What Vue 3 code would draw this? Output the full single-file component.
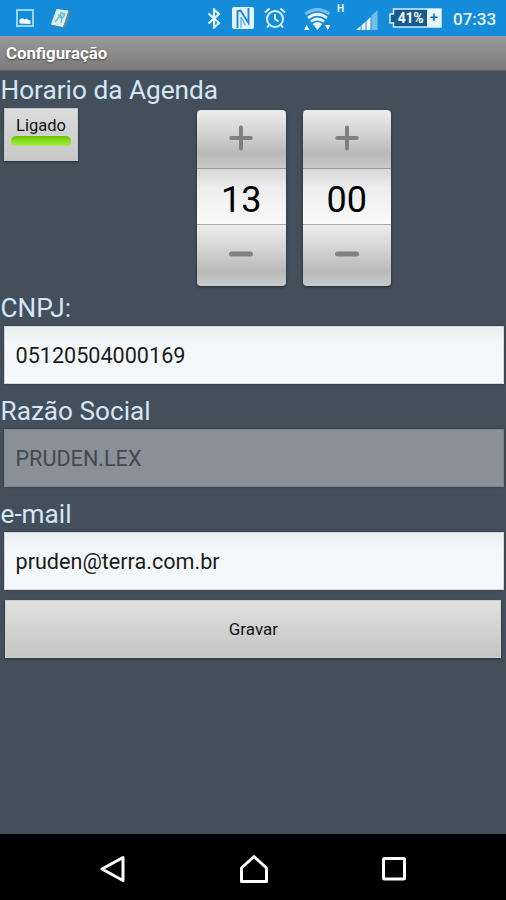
<template>
  <div class="screen">
    <header class="status-bar">
      <svg class="ic-picture" width="18" height="18" viewBox="0 0 18 18">
        <rect x="1" y="1" width="16" height="16" fill="none" stroke="#a9dcf8" stroke-width="1.8" />
        <path d="M3.500 14.500V11l2.500-2 2.500 1.500 2-1 2 1.500 2 .5v3.500z" fill="#fff" />
      </svg>
      <svg class="ic-note" width="21" height="21" viewBox="0 0 21 21">
        <path d="M7 1.500L19.500 3Q20.500 8 15.500 19L13 20 1.500 17.500z" fill="#5f8796" />
        <path d="M6.500 1L18.500 2.500 13 19 .8 16.500z" fill="#dceff0" />
        <path d="M11 4.500l4 1.500-2 3.500-3.500-1zM9.500 8.500L5 14M12 10l-1 5M8 6.500l4 5" fill="#9bd8db" stroke="#65bec7" stroke-width="1.300" />
      </svg>
      <span class="spacer"></span>
      <svg class="ic-bluetooth" width="14" height="21" viewBox="0 0 14 21">
        <path d="M1.500 5.500l10.500 9.500-5 4.500V1.500l5 4.500-10.500 9.500" fill="none" stroke="#e2f4ff" stroke-width="2.200" />
      </svg>
      <svg class="ic-nfc" width="22" height="22" viewBox="0 0 22 22">
        <rect width="22" height="22" rx="2" fill="#e3f4ff" />
        <path d="M5.500 21V4l3-.5L16.500 16V1" fill="none" stroke="#1c86d0" stroke-width="1.900" />
        <path d="M9 21V10l4.500 8.500" fill="none" stroke="#5fb0e4" stroke-width="1.300" />
      </svg>
      <svg class="ic-alarm" width="22" height="22" viewBox="0 0 22 22">
        <g fill="none" stroke="#d8f0ff" stroke-width="2">
          <circle cx="11" cy="12" r="8" />
          <path d="M11 7v5l3.500 2.500M1 5.500L5.500 1.500M21 5.500L16.500 1.500M5 18l-2 2.500M17 18l2 2.500" />
        </g>
      </svg>
      <svg class="ic-wifi" width="27" height="23" viewBox="0 0 27 23">
        <g fill="none" stroke="#eaf7ff" stroke-width="2.700">
          <path d="M1.500 6q12-9 24 0" stroke="#77bfea" stroke-width="3.200" />
          <path d="M4 10q9.500-7.500 19 0" />
          <path d="M7 13.500q6.500-5 13 0" />
          <path d="M9.500 17q4-3 8 0" />
        </g>
        <path d="M10.500 18q3-2 6 0l-3 4zM0 22l2.700-5 2.700 5zM21 17h5.500L23.700 22z" fill="#fff" />
      </svg>
      <span class="net">H</span>
      <svg class="ic-signal" width="22" height="21" viewBox="0 0 22 21">
        <path d="M0 21l4.500-4v4zM5.500 16.500l4-4V21h-4zM10.500 12l4-4v13h-4z" fill="#f0faff" />
        <path d="M15.500 6.500L21.500 1v20h-6z" fill="#73bdeb" />
      </svg>
      <div class="battery">
        <svg class="battery-body" width="53" height="20" viewBox="0 0 53 20">
          <path d="M4.500 1H52v18H4.500v-4H1V6h3.500z" fill="#155b91" stroke="#d5edfc" stroke-width="1.500" />
        </svg>
        <span class="battery-level">41%</span>
        <span class="battery-plus">+</span>
      </div>
      <span class="clock">07:33</span>
    </header>

    <div class="title-bar">Configuração</div>

    <main class="form">
      <h2 class="label">Horario da Agenda</h2>
      <div class="schedule">
        <button class="toggle" :class="{ on: enabled }" @click="enabled = !enabled">
          <span>{{ enabled ? 'Ligado' : 'Desligado' }}</span>
          <i class="led"></i>
        </button>
        <div class="pickers">
          <div v-for="p in pickers" :key="p.name" class="picker">
            <button class="step" @click="change(p, 1)">
              <svg width="24" height="26" viewBox="0 0 24 26">
                <path d="M12 2.500v21M2.300 13h19.400" />
              </svg>
            </button>
            <div class="value">{{ pad(p.value) }}</div>
            <button class="step minus" @click="change(p, -1)">
              <svg width="24" height="26" viewBox="0 0 24 26">
                <path d="M2.500 13h19" />
              </svg>
            </button>
          </div>
        </div>
      </div>

      <div v-for="f in fields" :key="f.label" class="field">
        <label class="label">{{ f.label }}</label>
        <input v-model="f.value" class="input" type="text" spellcheck="false" :disabled="f.disabled">
      </div>

      <button class="save">Gravar</button>
    </main>

    <nav class="nav-bar">
      <svg width="28" height="30" viewBox="0 0 28 30">
        <path d="M25 3.500v23L4 15z" />
      </svg>
      <svg width="30" height="30" viewBox="0 0 30 30">
        <path d="M15 2.500L27.500 14v13.500h-25V14z" />
      </svg>
      <svg width="26" height="30" viewBox="0 0 26 30">
        <rect x="2.500" y="4.500" width="21" height="20.500" rx="1" />
      </svg>
    </nav>
  </div>
</template>

<script setup>
import { ref } from 'vue'

const enabled = ref(true)

const pickers = ref([
  { name: 'hour', value: 13, max: 24 },
  { name: 'minute', value: 0, max: 60 }
])

const fields = ref([
  { label: 'CNPJ:', value: '05120504000169', disabled: false },
  { label: 'Razão Social', value: 'PRUDEN.LEX', disabled: true },
  { label: 'e-mail', value: 'pruden@terra.com.br', disabled: false }
])

const pad = (n) => String(n).padStart(2, '0')

const change = (p, step) => {
  p.value = (p.value + step + p.max) % p.max
}
</script>

<style>
body {
  margin: 0;
  background: #434f5b;
}
</style>

<style scoped>
.screen {
  width: 506px;
  height: 900px;
  display: flex;
  flex-direction: column;
  overflow: hidden;
  background: #434f5b;
  font-family: Roboto, "Liberation Sans", sans-serif;
}

.screen * {
  box-sizing: border-box;
}

button {
  padding: 0;
  border: none;
  font-family: inherit;
  color: #111;
}

/* Status bar */
.status-bar {
  height: 36px;
  flex: none;
  display: flex;
  align-items: center;
  padding: 0 10px 0 16px;
  background: #148cda;
  color: #e6f5ff;
}

.status-bar svg {
  flex: none;
}

.ic-note {
  margin-left: 16px;
}

.spacer {
  flex: 1;
}

.ic-nfc {
  margin-left: 11px;
}

.ic-alarm {
  margin-left: 10px;
}

.ic-wifi {
  margin: 3px 0 0 18px;
}

.net {
  width: 9px;
  margin: 0 0 19px 6px;
  font-size: 10px;
  font-weight: 700;
  line-height: 12px;
}

.ic-signal {
  margin: 2px 0 0 10px;
}

.battery {
  position: relative;
  width: 53px;
  height: 20px;
  margin-left: 11px;
  display: flex;
  padding: 1px 1px 1px 5px;
}

.battery-body {
  position: absolute;
  top: 0;
  left: 0;
}

.battery-level {
  position: relative;
  flex: 1;
  font-size: 14px;
  font-weight: 700;
  line-height: 18px;
  letter-spacing: -0.3px;
  text-align: center;
  color: #fff;
}

.battery-plus {
  position: relative;
  width: 14px;
  background: #e6f5ff;
  color: #1b74b5;
  font-size: 15px;
  font-weight: 500;
  line-height: 17px;
  text-align: center;
}

.clock {
  width: 43px;
  margin: 2px 0 0 11px;
  font-size: 17px;
  font-weight: 500;
  white-space: nowrap;
}

/* Title */
.title-bar {
  height: 35px;
  flex: none;
  padding-left: 6px;
  border-bottom: 1px solid #5b6268;
  background: linear-gradient(#999, #7c7c7c);
  color: #fff;
  font-size: 16.8px;
  font-weight: 700;
  line-height: 35px;
  text-shadow: 0 1px 2px rgba(0, 0, 0, 0.5);
}

/* Form */
.form {
  flex: 1;
  display: flex;
  flex-direction: column;
}

.label {
  display: block;
  height: 37px;
  margin: 0;
  padding: 1px 0 0 0.5px;
  color: #d3e6f8;
  font-size: 26.2px;
  font-weight: 400;
  line-height: 37px;
}

.schedule {
  height: 181px;
  display: flex;
  align-items: flex-start;
  padding-left: 4px;
}

.toggle {
  width: 74px;
  height: 53px;
  display: flex;
  flex-direction: column;
  align-items: center;
  margin-top: -0.5px;
  padding-top: 7px;
  border: 1px solid #c4c6c7;
  background: linear-gradient(#dcdcdc, #c8c8c8);
  box-shadow: 0 1px 2px #252d34;
  font-size: 16.5px;
  line-height: 20px;
}

.led {
  width: 60px;
  height: 10px;
  border-radius: 5px 5px 4px 4px;
  background: #aaa;
}

.toggle.on .led {
  background: linear-gradient(#68bd0c, #86de13 45%, #a9e95d);
}

.pickers {
  display: flex;
  gap: 17px;
  margin: 2px 0 0 119px;
}

.picker {
  width: 88.5px;
  height: 175.5px;
  display: flex;
  flex-direction: column;
  border-radius: 4px;
  overflow: hidden;
  box-shadow: 0 1px 3px #20282f;
}

.step {
  height: 58px;
  display: flex;
  align-items: center;
  justify-content: center;
  padding-bottom: 3px;
  background: linear-gradient(#ededed, #d0d0d0 45%, #b9b9b9 75%, #c9c9c9);
}

.step svg {
  fill: none;
  stroke: #808080;
  stroke-width: 4;
  stroke-linecap: round;
}

.step.minus {
  height: 60.5px;
  padding-bottom: 2px;
}

.step.minus svg {
  stroke-width: 5;
}

.value {
  height: 57px;
  border-top: 1.5px solid #999;
  border-bottom: 1px solid #aaa;
  background: linear-gradient(#d7d7d7, #ededed 35%, #fafafa);
  color: #000;
  font-size: 36px;
  line-height: 63px;
  text-align: center;
}

.field {
  height: 103px;
}

.input {
  display: block;
  width: 499.5px;
  height: 58px;
  margin-left: 4px;
  padding: 1px 11px 0 10.5px;
  border: 1px solid #d4d9dd;
  border-radius: 0;
  outline: none;
  background: linear-gradient(#ecefef, #f4f7f9 30%, #f4f8fa);
  box-shadow: 0 0 2px #2b333b;
  color: #1c1c1c;
  font-family: inherit;
  font-size: 21.6px;
}

.input:disabled {
  border-color: #7d8790;
  background: #899097;
  color: #44494e;
  opacity: 1;
}

.save {
  width: 496px;
  height: 58px;
  margin: 2px 0 0 5.4px;
  border: 1px solid #cfcfcf;
  background: linear-gradient(#e0e0e0, #c5c5c5);
  box-shadow: 0 1px 2px #252d34;
  font-size: 17px;
}

/* Navigation */
.nav-bar {
  height: 66px;
  flex: none;
  display: flex;
  align-items: center;
  justify-content: space-between;
  padding: 4px 99px 0 98px;
  background: #000;
}

.nav-bar svg {
  fill: none;
  stroke: #fff;
  stroke-width: 3;
  stroke-linejoin: round;
}
</style>
